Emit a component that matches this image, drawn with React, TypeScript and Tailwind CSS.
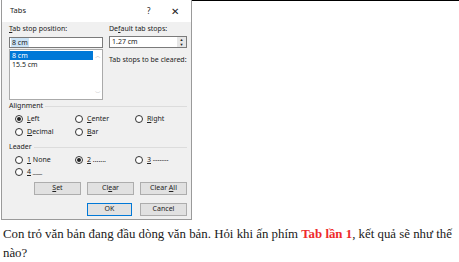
const ui = { fontFamily: '"Noto Sans", "Open Sans", sans-serif' };

type RadioProps = { checked?: boolean; children: React.ReactNode };

const Radio = ({ checked, children }: RadioProps) => (
    <div className="flex items-center h-[10px]">
        <div className="flex justify-center items-center w-[8px] h-[8px] mr-[4px] rounded-full border border-[#333] bg-white">
            {checked && <div className="w-[4px] h-[4px] rounded-full bg-[#222]"></div>}
        </div>
        <span className="text-[7px] leading-[10px] text-[#222]">{children}</span>
    </div>
);

const Btn = ({ children, primary }: { children: React.ReactNode; primary?: boolean }) => (
    <div
        className={
            primary
                ? "flex justify-center items-center w-[45px] h-[13px] border border-[#0078d7] bg-[#e1e1e1] text-[7px] text-[#222]"
                : "flex justify-center items-center w-[47px] h-[13px] border border-[#adadad] bg-[#e1e1e1] text-[7px] text-[#222]"
        }
    >
        <span className="whitespace-pre">{children}</span>
    </div>
);

const Section = ({ title }: { title: string }) => (
    <div className="flex items-center h-[10px] mt-[1px] pr-[4px]">
        <span className="text-[7px] leading-[10px] text-[#222] mr-[2px]">{title}</span>
        <div className="grow h-px bg-[#dcdcdc]"></div>
    </div>
);

const TabsDialog = () => (
    <div className="shrink-0 w-[191px] h-[220px] ml-[1px] flex flex-col border border-t-0 border-[#9a9a9a] bg-[#f0f0f0]" style={ui}>
        {/* title bar */}
        <div className="flex items-center h-[22px] bg-white pl-[8px] text-[7.5px] text-[#222]">
            <span className="grow">Tabs</span>
            <span className="w-[24px] text-[8px]">?</span>
            <span className="w-[20px] text-[10px] leading-none font-light">✕</span>
        </div>

        <div className="flex flex-col grow pl-[7px] pt-[2px]">
            <div className="flex">
                <div className="w-[94px]">
                    <div className="h-[10px] text-[7px] leading-[10px] text-[#222]">
                        <span className="underline">T</span>ab stop position:
                    </div>
                    <div className="flex items-center h-[11px] mt-[3px] px-[1px] border border-[#7a7a7a] bg-white text-[7px] text-[#222]">
                        <span className="bg-[#cce4f7] px-px leading-[9px]">8 cm</span>
                    </div>
                    <div className="flex h-[51px] mt-px border border-[#aaaaaa] bg-white text-[7px] text-[#222]">
                        <div className="grow pt-px">
                            <div className="h-[9px] leading-[9px] pl-[2px] bg-[#0078d7] text-white">8 cm</div>
                            <div className="h-[9px] leading-[9px] pl-[2px]">15.5 cm</div>
                        </div>
                        <div className="flex flex-col justify-between items-center w-[9px] py-[2px] text-[6px] leading-[8px] text-[#a8a8a8]">
                            <span>︿</span>
                            <span>﹀</span>
                        </div>
                    </div>
                </div>
                <div className="w-[78px] ml-[6px]">
                    <div className="h-[10px] text-[7px] leading-[10px] text-[#222]">
                        De<span className="underline">f</span>ault tab stops:
                    </div>
                    <div className="flex items-center h-[12px] mt-[2px] border border-[#7a7a7a] bg-white text-[7px] text-[#222]">
                        <span className="grow pl-[2px]">1.27 cm</span>
                        <div className="flex flex-col justify-center items-center w-[9px] h-full bg-[#e6e6e6] text-[4px] leading-[5px]">
                            <span>▲</span>
                            <span>▼</span>
                        </div>
                    </div>
                    <div className="h-[10px] mt-[7px] whitespace-nowrap text-[7px] leading-[10px] text-[#222]">
                        Tab stops to be cleared:
                    </div>
                </div>
            </div>

            <Section title="Alignment" />
            <div className="grid grid-cols-[60px_60px_60px] pl-[6px] gap-y-[3px] mt-[3px]">
                <Radio checked>
                    <span className="underline">L</span>eft
                </Radio>
                <Radio>
                    <span className="underline">C</span>enter
                </Radio>
                <Radio>
                    <span className="underline">R</span>ight
                </Radio>
                <Radio>
                    <span className="underline">D</span>ecimal
                </Radio>
                <Radio>
                    <span className="underline">B</span>ar
                </Radio>
            </div>

            <div className="mt-[4px]">
                <Section title="Leader" />
            </div>
            <div className="grid grid-cols-[60px_60px_60px] pl-[6px] gap-y-[2px] mt-[3px]">
                <Radio>
                    <span className="underline">1</span> None
                </Radio>
                <Radio checked>
                    <span className="underline">2</span> .......
                </Radio>
                <Radio>
                    <span className="underline">3</span> -------
                </Radio>
                <Radio>
                    <span className="underline">4</span> ___
                </Radio>
            </div>

            <div className="flex gap-[6px] mt-[5px] pl-[25px]">
                <Btn>
                    <span className="underline">S</span>et
                </Btn>
                <Btn>
                    Cl<span className="underline">e</span>ar
                </Btn>
                <Btn>
                    Clear{" "}<span className="underline">A</span>ll
                </Btn>
            </div>
            <div className="flex gap-[8px] mt-[8px] pl-[78px]">
                <Btn primary>OK</Btn>
                <Btn>Cancel</Btn>
            </div>
        </div>
    </div>
);

export default function App() {
    return (
        <div className="w-[459px] h-[262px] overflow-hidden bg-white">
            <div className="flex">
                <TabsDialog />
                <div className="grow h-px bg-black"></div>
            </div>
            <p
                className="pt-[5px] pl-[3px] text-[12.85px] leading-[19px] text-[#1a1a1a]"
                style={{ fontFamily: '"Liberation Serif", "Times New Roman", serif' }}
            >
                Con trỏ văn bản đang đầu dòng văn bản. Hỏi khi ấn phím{" "}
                <span className="font-bold text-[#ee2b2b]">Tab lần 1</span>, kết quả sẽ như thế nào?
            </p>
        </div>
    );
}
